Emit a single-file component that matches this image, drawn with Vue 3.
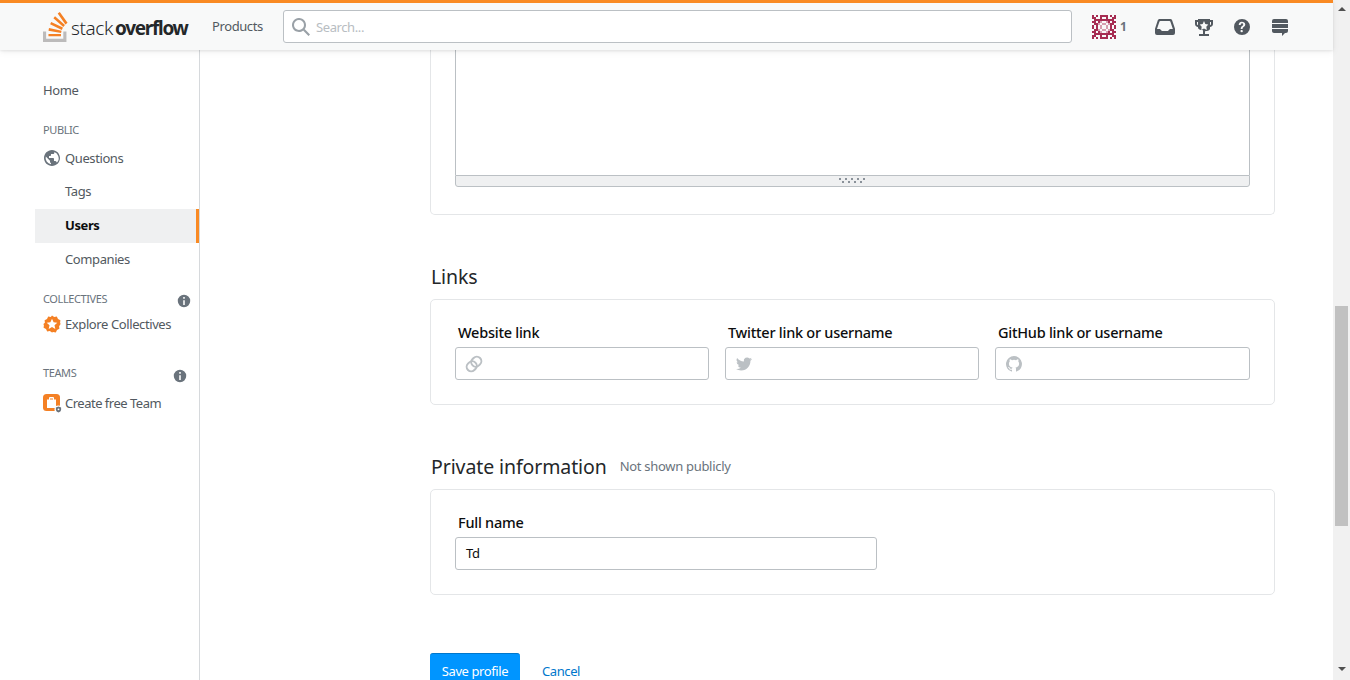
<script setup>
const quadrant = ['#.#.##', '##..#.', '.#####', '##.#+.', '.##+.+', '#.#.+.']
const cells = []
quadrant.forEach((row, y) => {
  row.split('').forEach((c, x) => {
    if (c === '.') return
    const fill = c === '#' ? '#a62c52' : '#d79db0'
    for (const [cx, cy] of [[x, y], [11 - x, y], [x, 11 - y], [11 - x, 11 - y]]) {
      cells.push({ x: cx * 2, y: cy * 2, fill })
    }
  })
})
const gripTop = [0, 6, 12, 18, 24]
const gripBottom = [3, 9, 15, 21]
</script>

<template>
  <div class="page">
    <div class="main">
      <header class="topbar">
        <a class="logo">
          <svg class="logo-mark" width="25" height="30" viewBox="0 0 32 37" preserveAspectRatio="none">
            <path d="M26 33v-9h4v13H0V24h4v9h22Z" fill="#bcbbbb" />
            <path d="m21.5 0-2.7 2 9.9 13.3 2.7-2L21.5 0ZM26 18.4 13.3 7.8l2.1-2.5 12.7 10.6-2.1 2.5ZM9.1 15.2l15 7 1.4-3-15-7-1.4 3Zm14 10.79.68-2.95-16.1-3.35L7 23l16.1 2.99ZM23 30H7v-3h16v3Z" fill="#f48024" />
          </svg>
          <span class="wordmark"><span class="light">stack</span><b>overflow</b></span>
        </a>
        <span class="products">Products</span>
        <div class="search">
          <svg width="18" height="18" viewBox="0 0 18 18"><path fill="#9aa1a7" d="m18 16.5-5.14-5.18h-.35a7 7 0 1 0-1.19 1.19v.35L16.5 18l1.5-1.5ZM12 7A5 5 0 1 1 2 7a5 5 0 0 1 10 0Z" /></svg>
          <span>Search...</span>
        </div>
        <div class="me">
          <svg width="24" height="24" viewBox="0 0 24 24">
            <rect v-for="(c, i) in cells" :key="i" :x="c.x" :y="c.y" width="2" height="2" :fill="c.fill" />
          </svg>
          <span>1</span>
        </div>
        <div class="tools">
          <svg width="20" height="18" viewBox="0 0 20 18"><path d="M4.63 1h10.56a2 2 0 0 1 1.94 1.35L20 10.79V15a2 2 0 0 1-2 2H2a2 2 0 0 1-2-2v-4.21l2.78-8.44c.25-.8 1-1.36 1.85-1.35Zm8.28 12 2-2h2.95l-2.44-7.32a1 1 0 0 0-.95-.68H5.35a1 1 0 0 0-.95.68L1.96 11h2.95l2 2h6Z" /></svg>
          <svg width="18" height="18" viewBox="0 0 18 18"><path d="M15 2V1H3v1H0v4c0 1.6 1.4 3 3 3v1c.4 1.5 3 2.2 5 2.2V16H4v2h10v-2h-4v-2.8c2 0 4.6-.7 5-2.2V9c1.6 0 3-1.4 3-3V2h-3ZM3 7c-.5 0-1-.5-1-1V4h1v3Zm6 3.5L6.2 12l.5-3.2-2-2.3 3-.5L9 3l1.3 3 3 .5-2 2.3.5 3.2L9 10.5ZM16 6c0 .5-.5 1-1 1V4h1v2Z" /></svg>
          <svg width="18" height="18" viewBox="0 0 18 18"><path d="M9 1a8 8 0 1 0 0 16A8 8 0 0 0 9 1Zm.81 12.13c-.02.71-.55 1.15-1.24 1.13-.66-.02-1.17-.49-1.15-1.2.02-.72.56-1.18 1.22-1.16.7.03 1.2.51 1.17 1.23ZM11.77 8c-.59.66-1.78 1.09-2.05 1.97a4 4 0 0 0-.09.75c0 .05-.03.16-.18.16H7.88c-.16 0-.18-.1-.18-.15.06-1.35.66-2.2 1.83-2.88.39-.29.7-.75.7-1.24.01-1.24-1.64-1.82-2.35-.72-.21.33-.18.73-.18 1.1H5.75c0-1.97 1.03-3.26 3.03-3.26 1.75 0 3.47.87 3.47 2.83 0 .57-.2 1.05-.48 1.44Z" /></svg>
          <svg width="18" height="18" viewBox="0 0 18 18"><path d="M15 1H3a2 2 0 0 0-2 2v2h16V3a2 2 0 0 0-2-2ZM1 13c0 1.1.9 2 2 2h8v3l3-3h1a2 2 0 0 0 2-2v-2H1v2Zm16-7H1v4h16V6Z" /></svg>
        </div>
      </header>

      <div class="body">
        <nav class="sidebar">
          <div class="row">Home</div>
          <div class="label public">PUBLIC</div>
          <div class="row icon-row">
            <svg width="18" height="18" viewBox="0 0 18 18"><path fill="#6a737c" d="M9 1C4.64 1 1 4.64 1 9c0 4.36 3.64 8 8 8 4.36 0 8-3.64 8-8 0-4.36-3.64-8-8-8ZM8 15.32a6.46 6.46 0 0 1-4.3-2.74 6.46 6.46 0 0 1-.93-5.01L7 11.8v.8c0 .88.12 1.32 1 1.32v1.4Zm5.72-2c-.2-.66-1-1.32-1.72-1.32h-1v-2c0-.55-.45-1-1-1H6V7h1c.55 0 1-.45 1-1V5h2c.88 0 1.4-.72 1.4-1.6v-.33a6.45 6.45 0 0 1 3.83 3.84 6.45 6.45 0 0 1-1.51 6.9v.01Z" /></svg>
            <span>Questions</span>
          </div>
          <div class="row sub">Tags</div>
          <div class="row sub active">Users</div>
          <div class="row sub">Companies</div>
          <div class="label collectives">
            <span>COLLECTIVES</span>
            <svg width="14" height="14" viewBox="0 0 18 18"><path fill="#6a737c" d="M9 1a8 8 0 1 1 0 16A8 8 0 0 1 9 1Zm1 13V8H8v6h2Zm0-8V4H8v2h2Z" /></svg>
          </div>
          <div class="row icon-row">
            <svg width="18" height="18" viewBox="0 0 18 18">
              <path fill="#f48024" d="M9 0.4l2.2 1.5 2.6-.3 1.2 2.4 2.4 1.2-.3 2.6L17.6 9l-1.5 2.2.3 2.6-2.4 1.2-1.2 2.4-2.6-.3L9 17.6l-2.2-1.5-2.6.3L3 14 .6 12.8l.3-2.6L.4 9l1.5-1.2-.3-2.6L4 4l1.2-2.4 2.6.3L9 .4Z" />
              <path fill="#fff" d="m9 3.8 1.6 3.5 3.7.4-2.8 2.5.8 3.7L9 12l-3.3 1.9.8-3.7-2.8-2.5 3.7-.4L9 3.8Z" />
            </svg>
            <span>Explore Collectives</span>
          </div>
          <div class="label teams">
            <span>TEAMS</span>
            <svg width="14" height="14" viewBox="0 0 18 18"><path fill="#6a737c" d="M9 1a8 8 0 1 1 0 16A8 8 0 0 1 9 1Zm1 13V8H8v6h2Zm0-8V4H8v2h2Z" /></svg>
          </div>
          <div class="row icon-row team-row">
            <svg width="20" height="20" viewBox="0 0 20 20">
              <rect x="0" y="0" width="17" height="17" rx="3.5" fill="#f48024" />
              <path fill="#fff" d="M4 5.5h2V4a1 1 0 0 1 1-1h3a1 1 0 0 1 1 1v1.5h2V14H4V5.5Zm3-1v1h3v-1H7Z" />
              <circle cx="15.5" cy="15.5" r="4" fill="#fff" />
              <path fill="#6a737c" d="M15.5 12.5l2.6 1v2c0 1.6-1.2 2.6-2.6 3-1.4-.4-2.6-1.4-2.6-3v-2l2.6-1Z" />
              <circle cx="15.5" cy="15.3" r=".9" fill="#fff" />
            </svg>
            <span>Create free Team</span>
          </div>
        </nav>

        <main class="content">
          <section class="card first">
            <div class="editor"></div>
            <div class="grip">
              <svg width="28" height="6" viewBox="0 0 28 6">
                <rect v-for="x in gripTop" :key="'t' + x" :x="x" y="0" width="2" height="2" fill="#8a9199" />
                <rect v-for="x in gripBottom" :key="'b' + x" :x="x" y="3" width="2" height="2" fill="#8a9199" />
              </svg>
            </div>
          </section>

          <h2 class="heading">Links</h2>
          <section class="card">
            <div class="links">
              <div class="field">
                <label>Website link</label>
                <div class="input">
                  <svg width="18" height="18" viewBox="0 0 18 18" fill="none" stroke="#bbc0c4" stroke-width="2">
                    <g transform="rotate(-45 9 9)">
                      <rect x="0.5" y="4.5" width="10.5" height="9" rx="4.5" />
                      <rect x="7" y="4.5" width="10.5" height="9" rx="4.5" />
                    </g>
                  </svg>
                </div>
              </div>
              <div class="field">
                <label>Twitter link or username</label>
                <div class="input">
                  <svg width="18" height="18" viewBox="0 0 18 18"><path fill="#bbc0c4" d="M17 4.04c-.59.26-1.22.44-1.88.52a3.3 3.3 0 0 0 1.44-1.82c-.64.37-1.34.64-2.09.79a3.28 3.28 0 0 0-5.6 2.99A9.3 9.3 0 0 1 2.12 3.1a3.28 3.28 0 0 0 1.02 4.38 3.28 3.28 0 0 1-1.49-.4v.03a3.29 3.29 0 0 0 2.64 3.22 3.3 3.3 0 0 1-1.48.06 3.29 3.29 0 0 0 3.07 2.28 6.58 6.58 0 0 1-4.85 1.36 9.33 9.33 0 0 0 5.04 1.47c6.04 0 9.34-5 9.34-9.33 0-.14 0-.28-.01-.42.64-.46 1.2-1.04 1.64-1.7Z" /></svg>
                </div>
              </div>
              <div class="field">
                <label>GitHub link or username</label>
                <div class="input">
                  <svg width="18" height="18" viewBox="0 0 18 18"><path fill="#bbc0c4" d="M9 1a8 8 0 0 0-2.53 15.59c.4.07.55-.17.55-.38l-.01-1.49c-2.01.37-2.53-.49-2.69-.94-.09-.23-.48-.94-.82-1.13-.28-.15-.68-.52-.01-.53.63-.01 1.08.58 1.23.82.72 1.21 1.87.87 2.33.66.07-.52.28-.87.51-1.07-1.78-.2-3.64-.89-3.64-3.95 0-.87.31-1.59.82-2.15-.08-.2-.36-1.02.08-2.12 0 0 .67-.21 2.2.82a7.42 7.42 0 0 1 4 0c1.53-1.04 2.2-.82 2.2-.82.44 1.1.16 1.92.08 2.12.51.56.82 1.27.82 2.15 0 3.07-1.87 3.75-3.65 3.95.29.25.54.73.54 1.48l-.01 2.2c0 .21.15.46.55.38A8.01 8.01 0 0 0 9 1Z" /></svg>
                </div>
              </div>
            </div>
          </section>

          <h2 class="heading"><span>Private information</span><small>Not shown publicly</small></h2>
          <section class="card">
            <div class="field name">
              <label>Full name</label>
              <div class="input text">Td</div>
            </div>
          </section>

          <div class="actions">
            <button class="save">Save profile</button>
            <a class="cancel">Cancel</a>
          </div>
        </main>
      </div>
    </div>

    <aside class="scrollbar">
      <span class="arrow up"></span>
      <span class="thumb"></span>
      <span class="arrow down"></span>
    </aside>
  </div>
</template>

<style>
html, body { margin: 0; overflow: hidden; background: #fff; }
</style>

<style scoped>
.page {
  width: 1350px;
  height: 680px;
  display: flex;
  overflow: hidden;
  font-family: "Noto Sans", "Open Sans", sans-serif;
  font-size: 13px;
  letter-spacing: -0.4px;
  color: #525960;
}
.main { width: 1333px; height: 680px; display: flex; flex-direction: column; }

.topbar {
  height: 47px;
  flex: none;
  border-top: 3px solid #f98a24;
  background: #f8f9f9;
  box-shadow: 0 1px 2px rgba(12,13,14,.05), 0 1px 4px rgba(12,13,14,.05), 0 2px 8px rgba(12,13,14,.05);
  display: flex;
  align-items: center;
  padding-left: 43px;
  position: relative;
  z-index: 2;
}
.logo { display: flex; align-items: center; width: 169px; flex: none; }
.logo-mark { flex: none; margin-right: 3px; }
.wordmark { font-size: 19px; color: #242729; margin-top: 3px; white-space: nowrap; }
.wordmark .light { font-weight: 300; letter-spacing: -0.4px; margin-right: 2px; }
.wordmark b { font-weight: 700; letter-spacing: -1.3px; }
.products { color: #525960; width: 71px; flex: none; padding-bottom: 1px; }
.search {
  width: 789px;
  height: 33px;
  box-sizing: border-box;
  flex: none;
  background: #fff;
  border: 1px solid #bbc0c4;
  border-radius: 3px;
  display: flex;
  align-items: center;
  gap: 6px;
  padding-left: 8px;
  color: #b8bdc2;
}
.me {
  margin-left: 20px;
  width: 63px;
  flex: none;
  display: flex;
  align-items: center;
  gap: 4px;
  font-size: 12px;
  font-weight: 700;
  color: #6a737c;
}
.tools { display: flex; align-items: center; gap: 20px; fill: #525960; }

.body { display: flex; flex: 1; min-height: 0; }
.sidebar {
  width: 164px;
  flex: none;
  padding: 23px 0 0 35px;
  border-right: 1px solid #d6d9dc;
  box-sizing: content-box;
}
.row { height: 34px; padding-left: 8px; display: flex; align-items: center; box-sizing: border-box; }
.row.sub { padding-left: 30px; padding-bottom: 2px; }
.row.active {
  background: #eff0f1;
  border-right: 3px solid #f98a24;
  color: #0c0d0e;
  font-weight: 700;
}
.icon-row { gap: 4px; padding-left: 8px; }
.icon-row svg { flex: none; }
.team-row { margin-top: 5px; gap: 2px; letter-spacing: -0.5px; }
.team-row svg { margin-top: 2px; }
.label {
  height: 16px;
  padding-left: 8px;
  font-size: 11px;
  line-height: 16px;
  color: #6a737c;
  display: flex;
  justify-content: space-between;
  align-items: flex-start;
}
.label svg { margin-top: 3px; }
.public { margin-top: 15px; margin-bottom: 3px; }
.collectives { margin-top: 14px; padding-right: 8px; }
.teams { margin-top: 24px; padding-right: 12px; }
.teams svg { margin-top: 4px; }

.content { padding-left: 230px; width: 845px; flex: none; }
.card {
  box-sizing: border-box;
  width: 845px;
  border: 1px solid #e4e6e8;
  border-radius: 5px;
  padding: 23px 24px 24px;
}
.card.first {
  border-top: 0;
  border-radius: 0 0 5px 5px;
  padding: 0 24px 27px;
  height: 165px;
}
.editor {
  height: 125px;
  box-sizing: border-box;
  border: 1px solid #bbc0c4;
  border-width: 0 1px;
}
.grip {
  height: 12px;
  box-sizing: border-box;
  background: #eff0f1;
  border: 1px solid #bbc0c4;
  border-radius: 0 0 3px 3px;
  display: flex;
  justify-content: center;
  align-items: center;
}
.heading {
  margin: 49px 0 9px 1px;
  height: 26px;
  font-size: 19.5px;
  line-height: 26px;
  font-weight: 400;
  color: #242729;
  letter-spacing: -0.1px;
  display: flex;
  align-items: center;
  gap: 13px;
}
.heading small { font-size: 13px; line-height: 18px; color: #6a737c; letter-spacing: -0.3px; margin-bottom: 2px; }
.links { display: grid; grid-template-columns: 254px 254px 255px; gap: 16px; }
.field label {
  display: block;
  height: 19px;
  margin: 0 0 5px 3px;
  font-size: 14.5px;
  line-height: 19px;
  font-weight: 500;
  color: #0c0d0e;
  letter-spacing: -0.25px;
}
.input {
  height: 33px;
  box-sizing: border-box;
  border: 1px solid #bbc0c4;
  border-radius: 3px;
  padding-left: 9px;
  display: flex;
  align-items: center;
  color: #0c0d0e;
}
.name .input { width: 422px; }
.input.text { padding: 0 0 2px 10px; }

.actions { margin-top: 58px; display: flex; align-items: flex-start; gap: 22px; }
.save {
  width: 90px;
  height: 37px;
  padding: 0 0 2px;
  background: #0095ff;
  border: 1px solid #07c;
  border-width: 1px 0 0;
  border-radius: 3px;
  color: #fff;
  font: inherit;
  letter-spacing: inherit;
}
.cancel { color: #07c; margin-top: 9px; }

.scrollbar {
  width: 17px;
  height: 680px;
  flex: none;
  background: #f1f1f1;
  display: flex;
  flex-direction: column;
  align-items: center;
}
.arrow { width: 0; height: 0; border-left: 4px solid transparent; border-right: 4px solid transparent; flex: none; }
.up { border-bottom: 4px solid #505050; margin-top: 7px; }
.down { border-top: 4px solid #505050; margin-top: 141px; }
.thumb { width: 13px; height: 220px; background: #c1c1c1; margin-top: 295px; flex: none; }
</style>
